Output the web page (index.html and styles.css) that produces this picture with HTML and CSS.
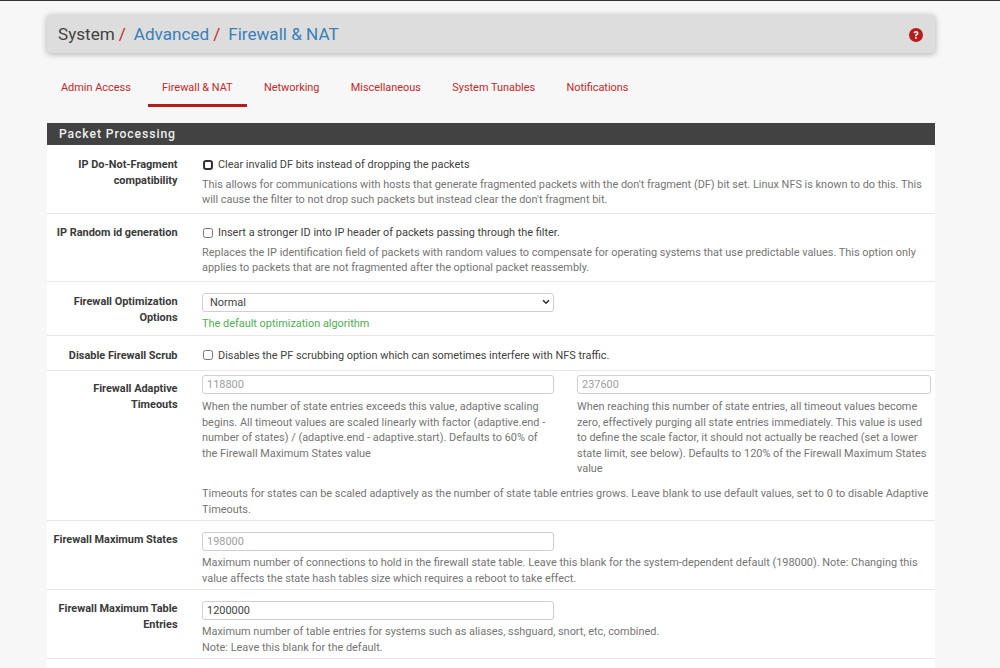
FILE: index.html
```html
<!DOCTYPE html>
<html lang="en">
<head>
<meta charset="utf-8">
<title>System / Advanced / Firewall &amp; NAT</title>
<link rel="stylesheet" href="styles.css">
</head>
<body>
<div class="page">
  <header class="crumbs">
    <h1 class="crumb-text">System<span class="sep">/</span><a class="crumb-link">Advanced</a><span class="sep">/</span><a class="crumb-link">Firewall &amp; NAT</a></h1>
    <svg class="help" viewBox="0 0 24 24" width="14" height="14" aria-hidden="true">
      <circle cx="12" cy="12" r="12" fill="#b71c1c"/>
      <path d="M8 9.2c0-2.4 1.8-3.9 4.2-3.9 2.3 0 4 1.4 4 3.5 0 1.6-.9 2.4-2 3.1-.9.6-1.2.9-1.2 1.8v.5h-2.6v-.8c0-1.5.6-2.2 1.7-2.9.9-.6 1.4-1 1.4-1.7 0-.7-.6-1.2-1.4-1.2-.9 0-1.4.6-1.5 1.6z" fill="#fff"/>
      <rect x="10.3" y="15.6" width="2.9" height="2.9" rx=".5" fill="#fff"/>
    </svg>
  </header>
  <nav class="tabs">
    <a class="tab">Admin Access</a>
    <a class="tab tab-active">Firewall &amp; NAT</a>
    <a class="tab">Networking</a>
    <a class="tab">Miscellaneous</a>
    <a class="tab">System Tunables</a>
    <a class="tab">Notifications</a>
  </nav>
  <section class="panel">
    <h2 class="panel-title">Packet Processing</h2>
    <div class="row row-first">
      <div class="label">IP Do-Not-Fragment compatibility</div>
      <div class="field">
        <label class="check"><input type="checkbox" class="box box-focus"> Clear invalid DF bits instead of dropping the packets</label>
        <p class="help-text">This allows for communications with hosts that generate fragmented packets with the don't fragment (DF) bit set. Linux NFS is known to do this. This will cause the filter to not drop such packets but instead clear the don't fragment bit.</p>
      </div>
    </div>
    <div class="row">
      <div class="label">IP Random id generation</div>
      <div class="field">
        <label class="check"><input type="checkbox" class="box"> Insert a stronger ID into IP header of packets passing through the filter.</label>
        <p class="help-text">Replaces the IP identification field of packets with random values to compensate for operating systems that use predictable values. This option only applies to packets that are not fragmented after the optional packet reassembly.</p>
      </div>
    </div>
    <div class="row row-select">
      <div class="label">Firewall Optimization Options</div>
      <div class="field">
        <select class="control control-half"><option>Normal</option></select>
        <p class="help-text help-green">The default optimization algorithm</p>
      </div>
    </div>
    <div class="row row-short">
      <div class="label">Disable Firewall Scrub</div>
      <div class="field">
        <label class="check"><input type="checkbox" class="box"> Disables the PF scrubbing option which can sometimes interfere with NFS traffic.</label>
      </div>
    </div>
    <div class="row row-adaptive">
      <div class="label">Firewall Adaptive Timeouts</div>
      <div class="field">
        <div class="cols">
          <div>
            <input class="control" placeholder="118800">
            <p class="help-text help-col">When the number of state entries exceeds this value, adaptive scaling begins. All timeout values are scaled linearly with factor (adaptive.end - number of states) / (adaptive.end - adaptive.start). Defaults to 60% of the Firewall Maximum States value</p>
          </div>
          <div>
            <input class="control" placeholder="237600">
            <p class="help-text help-col">When reaching this number of state entries, all timeout values become zero, effectively purging all state entries immediately. This value is used to define the scale factor, it should not actually be reached (set a lower state limit, see below). Defaults to 120% of the Firewall Maximum States value</p>
          </div>
        </div>
        <p class="help-text help-gap">Timeouts for states can be scaled adaptively as the number of state table entries grows. Leave blank to use default values, set to 0 to disable Adaptive Timeouts.</p>
      </div>
    </div>
    <div class="row row-input">
      <div class="label">Firewall Maximum States</div>
      <div class="field">
        <input class="control control-half" placeholder="198000">
        <p class="help-text">Maximum number of connections to hold in the firewall state table. Leave this blank for the system-dependent default (198000). Note: Changing this value affects the state hash tables size which requires a reboot to take effect.</p>
      </div>
    </div>
    <div class="row row-input">
      <div class="label">Firewall Maximum Table Entries</div>
      <div class="field">
        <input class="control control-half" value="1200000">
        <p class="help-text">Maximum number of table entries for systems such as aliases, sshguard, snort, etc, combined.<br>Note: Leave this blank for the default.</p>
      </div>
    </div>
    <div class="row row-last"></div>
  </section>
</div>
</body>
</html>
```
FILE: styles.css
```css
* { box-sizing: border-box; }
html, body { height: 100%; }
body {
  margin: 0;
  height: 668px;
  overflow: hidden;
  background: #f7f7f7;
  border-top: 1px solid #333;
  font-family: Roboto, "Liberation Sans", sans-serif;
  font-size: 10.92px;
  line-height: 15.6px;
  color: #424242;
}
.page { width: 888px; margin-left: 47px; padding-top: 14px; }
.crumbs {
  height: 38px;
  display: flex;
  align-items: center;
  justify-content: space-between;
  padding: 0 12px 0 11px;
  background: #ddd;
  border-radius: 3px;
  box-shadow: 0 1px 6px rgba(0,0,0,.3);
}
.crumb-text { margin: 0; font-size: 17.1px; font-weight: 400; line-height: 24px; color: #424242; }
.crumb-link { color: #3a7fb8; }
.sep { color: #c62828; margin: 0 8px 0 4px; }
.help { display: block; margin-top: 2px; }
.tabs { display: flex; height: 54px; padding-top: 17px; margin-bottom: 16px; }
.tab {
  padding: 9px 14px 0;
  margin-right: 3.3px;
  height: 36.5px;
  font-size: 10.92px;
  line-height: 18px;
  color: #c62828;
  border-bottom: 3px solid transparent;
}
.tab-active { border-bottom-color: #b71c1c; }
.panel { width: 888px; background: #fff; }
.panel-title {
  margin: 0;
  height: 22px;
  padding-left: 12px;
  background: #424242;
  color: #eee;
  font-size: 12.2px;
  font-weight: 500;
  line-height: 22px;
  letter-spacing: .9px;
}
.row {
  display: flex;
  padding: 11.5px 0 4.5px;
  border-bottom: 1px solid #e8e8e8;
}
.row-first { padding: 12px 0 5px; }
.row-select { padding: 11px 0 3.4px; }
.row-select .label { padding-top: 1px; }
.row-short { padding: 12px 0 6.4px; }
.row-adaptive { padding: 4px 0 2.5px; }
.row-adaptive .label { padding-top: 6px; }
.row-input { padding: 11px 0 3px; }
.row-last { height: 30px; border-bottom: 0; }
.label {
  flex: 0 0 130.5px;
  text-align: right;
  font-weight: 700;
  font-size: 10.92px;
  line-height: 16px;
  color: #3a3a3a;
}
.field { flex: 1; margin-left: 24.5px; padding-right: 4px; min-width: 0; }
.check { display: flex; align-items: center; gap: 5px; height: 15.6px; color: #424242; }
.box { width: 10px; height: 10px; margin: 0 0 0 1px; }
.box-focus { appearance: none; background: #fff; border: 2px solid #333; border-radius: 3px; }
.help-text { margin: 4px 0 0; color: #757575; font-size: 10.92px; line-height: 15.6px; }
.help-col { margin-top: 5px; }
.help-green { color: #4caf50; }
.help-text.help-gap { margin-top: 9.5px; }
.control {
  display: block;
  width: 100%;
  height: 19px;
  padding: 0 8px 0 4px;
  background: #fff;
  border: 1px solid #cfcfcf;
  border-radius: 3px;
  font-family: inherit;
  font-size: 10.92px;
  color: #424242;
}
.control::placeholder { color: #9e9e9e; opacity: 1; }
.control-half { width: 352px; }
select.control {
  padding-left: 7px;
  appearance: none;
  background: #fff url("data:image/svg+xml,%3Csvg xmlns='http://www.w3.org/2000/svg' width='8' height='6' viewBox='0 0 8 6'%3E%3Cpath d='M1 1.2l3 3 3-3' fill='none' stroke='%23333' stroke-width='1.6'/%3E%3C/svg%3E") no-repeat right 3px center;
}
.cols { display: grid; grid-template-columns: 352px 354px; column-gap: 23px; }
```
